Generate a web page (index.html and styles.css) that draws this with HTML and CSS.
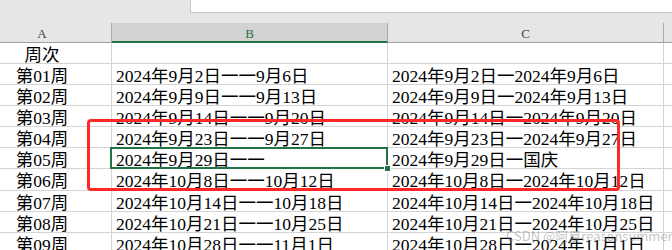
FILE: index.html
```html
<!DOCTYPE html>
<html lang="zh">
<head>
<meta charset="utf-8">
<link rel="stylesheet" href="styles.css">
</head>
<body>
<div class="sheet">
  <div class="top"><div class="fx"></div></div>
  <div class="grid">
    <div class="hd a">A</div><div class="hd b">B</div><div class="hd c">C</div><div class="hd d"></div>

    <div class="cell a">周次</div><div class="cell"></div><div class="cell"></div><div class="cell d"></div>
    <div class="cell a">第01周</div><div class="cell">2024年9月2日一一9月6日</div><div class="cell">2024年9月2日一2024年9月6日</div><div class="cell d"></div>
    <div class="cell a">第02周</div><div class="cell">2024年9月9日一一9月13日</div><div class="cell">2024年9月9日一2024年9月13日</div><div class="cell d"></div>
    <div class="cell a">第03周</div><div class="cell">2024年9月14日一一9月20日</div><div class="cell">2024年9月14日一2024年9月20日</div><div class="cell d"></div>
    <div class="cell a">第04周</div><div class="cell">2024年9月23日一一9月27日</div><div class="cell">2024年9月23日一2024年9月27日</div><div class="cell d"></div>
    <div class="cell a">第05周</div><div class="cell cur">2024年9月29日一一</div><div class="cell">2024年9月29日一国庆</div><div class="cell d"></div>
    <div class="cell a">第06周</div><div class="cell">2024年10月8日一一10月12日</div><div class="cell">2024年10月8日一2024年10月12日</div><div class="cell d"></div>
    <div class="cell a">第07周</div><div class="cell">2024年10月14日一一10月18日</div><div class="cell">2024年10月14日一2024年10月18日</div><div class="cell d"></div>
    <div class="cell a">第08周</div><div class="cell">2024年10月21日一一10月25日</div><div class="cell">2024年10月21日一2024年10月25日</div><div class="cell d"></div>
    <div class="cell a">第09周</div><div class="cell">2024年10月28日一一11月1日</div><div class="cell">2024年10月28日一2024年11月1日</div><div class="cell d"></div>
  </div>
  <div class="mark"></div>
  <div class="wm">CSDN @阿夏reasonsummer</div>
</div>
</body>
</html>
```

FILE: styles.css
```css
html, body {
  margin: 0;
  padding: 0;
  background: #fff;
  overflow: hidden;
}

.sheet {
  position: relative;
  width: 672px;
  height: 250px;
  overflow: hidden;
  background: #e6e6e6;
}

.top {
  height: 23px;
  display: flex;
  justify-content: flex-end;
  align-items: flex-start;
}

.fx {
  width: 482px;
  height: 13px;
  box-sizing: border-box;
  background: #fff;
  border-left: 1px solid #c6c6c6;
  border-bottom: 1px solid #c6c6c6;
}

.grid {
  display: grid;
  grid-template-columns: 112px 276px 276px 8px;
  grid-template-rows: 20px repeat(6, 21px) 22px 21px 21px 21px;
}

.hd {
  box-sizing: border-box;
  background: #e6e6e6;
  border-right: 1px solid #ababab;
  border-bottom: 1px solid #9f9f9f;
  text-align: center;
  font-family: "Liberation Serif", serif;
  font-size: 13px;
  line-height: 19px;
  padding-top: 1px;
  color: #444;
}

.hd.a {
  padding-right: 27px;
}

.hd.b {
  background: #d2d2d2;
  border-bottom: 2px solid #217346;
  color: #217346;
}

.hd.d {
  border-right: none;
}

.cell {
  box-sizing: border-box;
  background: #fff;
  border-right: 1px solid #d4d4d4;
  border-bottom: 1px solid #d4d4d4;
  font-family: "Liberation Serif", "Noto Sans CJK SC", serif;
  font-size: 17.5px;
  line-height: 20px;
  padding: 2px 0 0 4px;
  white-space: nowrap;
  color: #000;
}

.cell.a {
  text-align: center;
  padding-left: 0;
  padding-right: 27px;
}

.cell.d {
  border-right: none;
}

.cur {
  position: relative;
}

.cur::after {
  content: "";
  position: absolute;
  top: -1px;
  left: -2px;
  right: -1px;
  bottom: -1px;
  border: 2px solid #217346;
}

.cur::before {
  content: "";
  position: absolute;
  right: -4px;
  bottom: -4px;
  width: 5px;
  height: 5px;
  background: #217346;
  border: 1px solid #fff;
  z-index: 2;
}

.mark {
  position: absolute;
  left: 87px;
  top: 119px;
  width: 533px;
  height: 72px;
  box-sizing: border-box;
  border: 3px solid #ff2828;
  border-radius: 4px;
}

.wm {
  position: absolute;
  left: 506px;
  top: 227px;
  font-family: "Noto Sans CJK SC", "Liberation Sans", sans-serif;
  font-size: 13px;
  line-height: 18px;
  color: rgba(120, 120, 120, 0.45);
  white-space: nowrap;
}
```
